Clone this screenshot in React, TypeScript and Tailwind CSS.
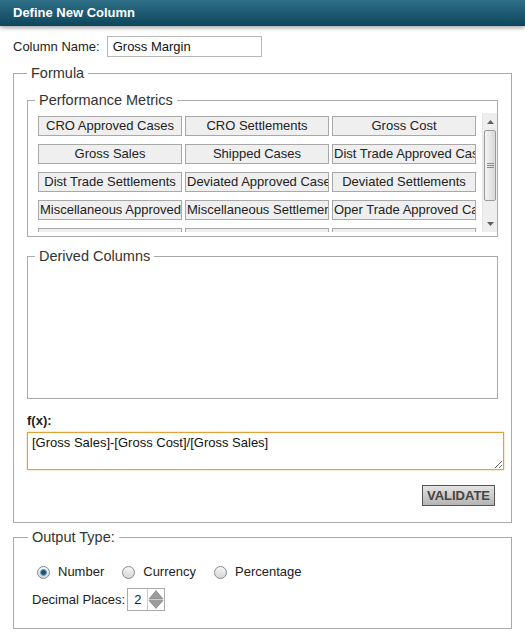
const metrics = [
  "CRO Approved Cases",
  "CRO Settlements",
  "Gross Cost",
  "Gross Sales",
  "Shipped Cases",
  "Dist Trade Approved Cases",
  "Dist Trade Settlements",
  "Deviated Approved Cases",
  "Deviated Settlements",
  "Miscellaneous Approved",
  "Miscellaneous Settlements",
  "Oper Trade Approved Cases",
  "Oper Trade Settlements",
  "Net Sales",
  "Net Revenue",
];

function Radio({ label, checked }: { label: string; checked?: boolean }) {
  return (
    <div className="flex items-center gap-[8px]">
      <span className="flex h-[13px] w-[13px] items-center justify-center rounded-full border border-[#8a8a8a] bg-gradient-to-b from-[#f6f6f6] to-[#d6d6d6]">
        {checked && (
          <span className="h-[7px] w-[7px] rounded-full border border-[#6fa6c8] bg-[#1d4f72]" />
        )}
      </span>
      <span>{label}</span>
    </div>
  );
}

function ScrollBar() {
  return (
    <div className="flex h-[119px] w-[15px] flex-col border-l border-[#e4e4e4] bg-[#eeeeee]">
      <div className="flex h-[17px] items-center justify-center">
        <svg width="7" height="4" viewBox="0 0 7 4">
          <polygon points="0,4 3.5,0 7,4" fill="#606060" />
        </svg>
      </div>
      <div className="mx-[1px] flex h-[71px] items-center justify-center rounded-[2px] border border-[#9a9a9a] bg-gradient-to-r from-[#f5f5f5] to-[#d8d8d8]">
        <svg width="7" height="7" viewBox="0 0 7 7">
          <path d="M0 1.5h7M0 3.5h7M0 5.5h7" stroke="#8a8a8a" strokeWidth="1" />
        </svg>
      </div>
      <div className="flex-1" />
      <div className="flex h-[17px] items-center justify-center">
        <svg width="7" height="4" viewBox="0 0 7 4">
          <polygon points="0,0 7,0 3.5,4" fill="#606060" />
        </svg>
      </div>
    </div>
  );
}

export default function App() {
  return (
    <div className="w-[525px] h-[633px] overflow-hidden bg-white font-['Liberation_Sans',Arial,sans-serif] text-[13px] text-[#222]">
      <div className="flex h-[26px] items-center bg-gradient-to-b from-[#2f7189] to-[#0b465c] px-[13px] font-bold text-white shadow-[0_2px_4px_rgba(0,0,0,0.35)]">
        Define New Column
      </div>

      <div className="px-[13px]">
        <div className="mt-[10px] flex items-center gap-[7px]">
          <span>Column Name:</span>
          <input
            defaultValue="Gross Margin"
            className="h-[21px] w-[155px] border border-[#b8b8b8] px-[5px] text-[13px] text-[#111] outline-none"
          />
        </div>

        <fieldset className="mt-[8px] min-w-0 border border-[#aaaaaa] pb-[16px] pl-[13px] pr-[13px] pt-[10px]">
          <legend className="px-1 text-[14.5px] leading-[17px] text-[#333]">Formula</legend>

          <fieldset className="min-w-0 border border-[#aaaaaa] pb-[4px] pl-[10px] pt-[4px]">
            <legend className="ml-[-3px] px-1 text-[14.5px] leading-[17px] text-[#333]">Performance Metrics</legend>
            <div className="flex justify-between">
              <div className="h-[119px] overflow-hidden pt-[3px]">
                <div className="grid grid-cols-[144px_144px_144px] gap-x-[3px] gap-y-[8px]">
                  {metrics.map((m) => (
                    <div
                      key={m}
                      className="h-[20px] overflow-hidden whitespace-nowrap border border-[#a8a8a8] bg-[#efefef] px-[1px] text-center leading-[18px] text-[#222]"
                    >
                      {m}
                    </div>
                  ))}
                </div>
              </div>
              <ScrollBar />
            </div>
          </fieldset>

          <fieldset className="mt-[11px] min-w-0 border border-[#aaaaaa] pl-[10px]">
            <legend className="ml-[-3px] px-1 text-[14.5px] leading-[17px] text-[#333]">Derived Columns</legend>
            <div className="h-[133px]" />
          </fieldset>

          <div className="mt-[14px] font-bold leading-[15px] text-[#222]">f(x):</div>
          <textarea
            defaultValue="[Gross Sales]-[Gross Cost]/[Gross Sales]"
            className="mt-[4px] block h-[38px] w-[477px] border border-[#e3a13a] px-[4px] pt-[2px] text-[13px] leading-[16px] text-[#111] shadow-[0_0_2px_#f2c77e] outline-none"
          />

          <div className="mt-[15px] flex justify-end pr-[3px]">
            <button className="h-[21px] w-[73px] border border-[#555] bg-gradient-to-b from-[#e4e4e4] to-[#b4b4b4] text-[13px] font-bold leading-[19px] text-[#444]">
              VALIDATE
            </button>
          </div>
        </fieldset>

        <fieldset className="mt-[6px] min-w-0 border border-[#aaaaaa] pb-[17px] pl-[18px] pt-[18px]">
          <legend className="ml-[-4px] px-1 text-[14.5px] leading-[17px] text-[#333]">Output Type:</legend>
          <div className="ml-[5px] flex h-[16px] items-center gap-[18px]">
            <Radio label="Number" checked />
            <Radio label="Currency" />
            <Radio label="Percentage" />
          </div>
          <div className="mt-[8px] flex items-center">
            <span>Decimal Places:</span>
            <div className="ml-[2px] flex h-[23px] items-center border border-[#aaaaaa]">
              <span className="w-[19px] pl-[6px]">2</span>
              <svg width="17" height="21" viewBox="0 0 17 21" className="border-l border-[#cccccc]">
                <polygon points="1,10 8.5,1 16,10" fill="#9b9b9b" stroke="#8a8a8a" strokeWidth="0.8" />
                <polygon points="1,11.5 8.5,20 16,11.5" fill="#9b9b9b" stroke="#8a8a8a" strokeWidth="0.8" />
              </svg>
            </div>
          </div>
        </fieldset>
      </div>
    </div>
  );
}
